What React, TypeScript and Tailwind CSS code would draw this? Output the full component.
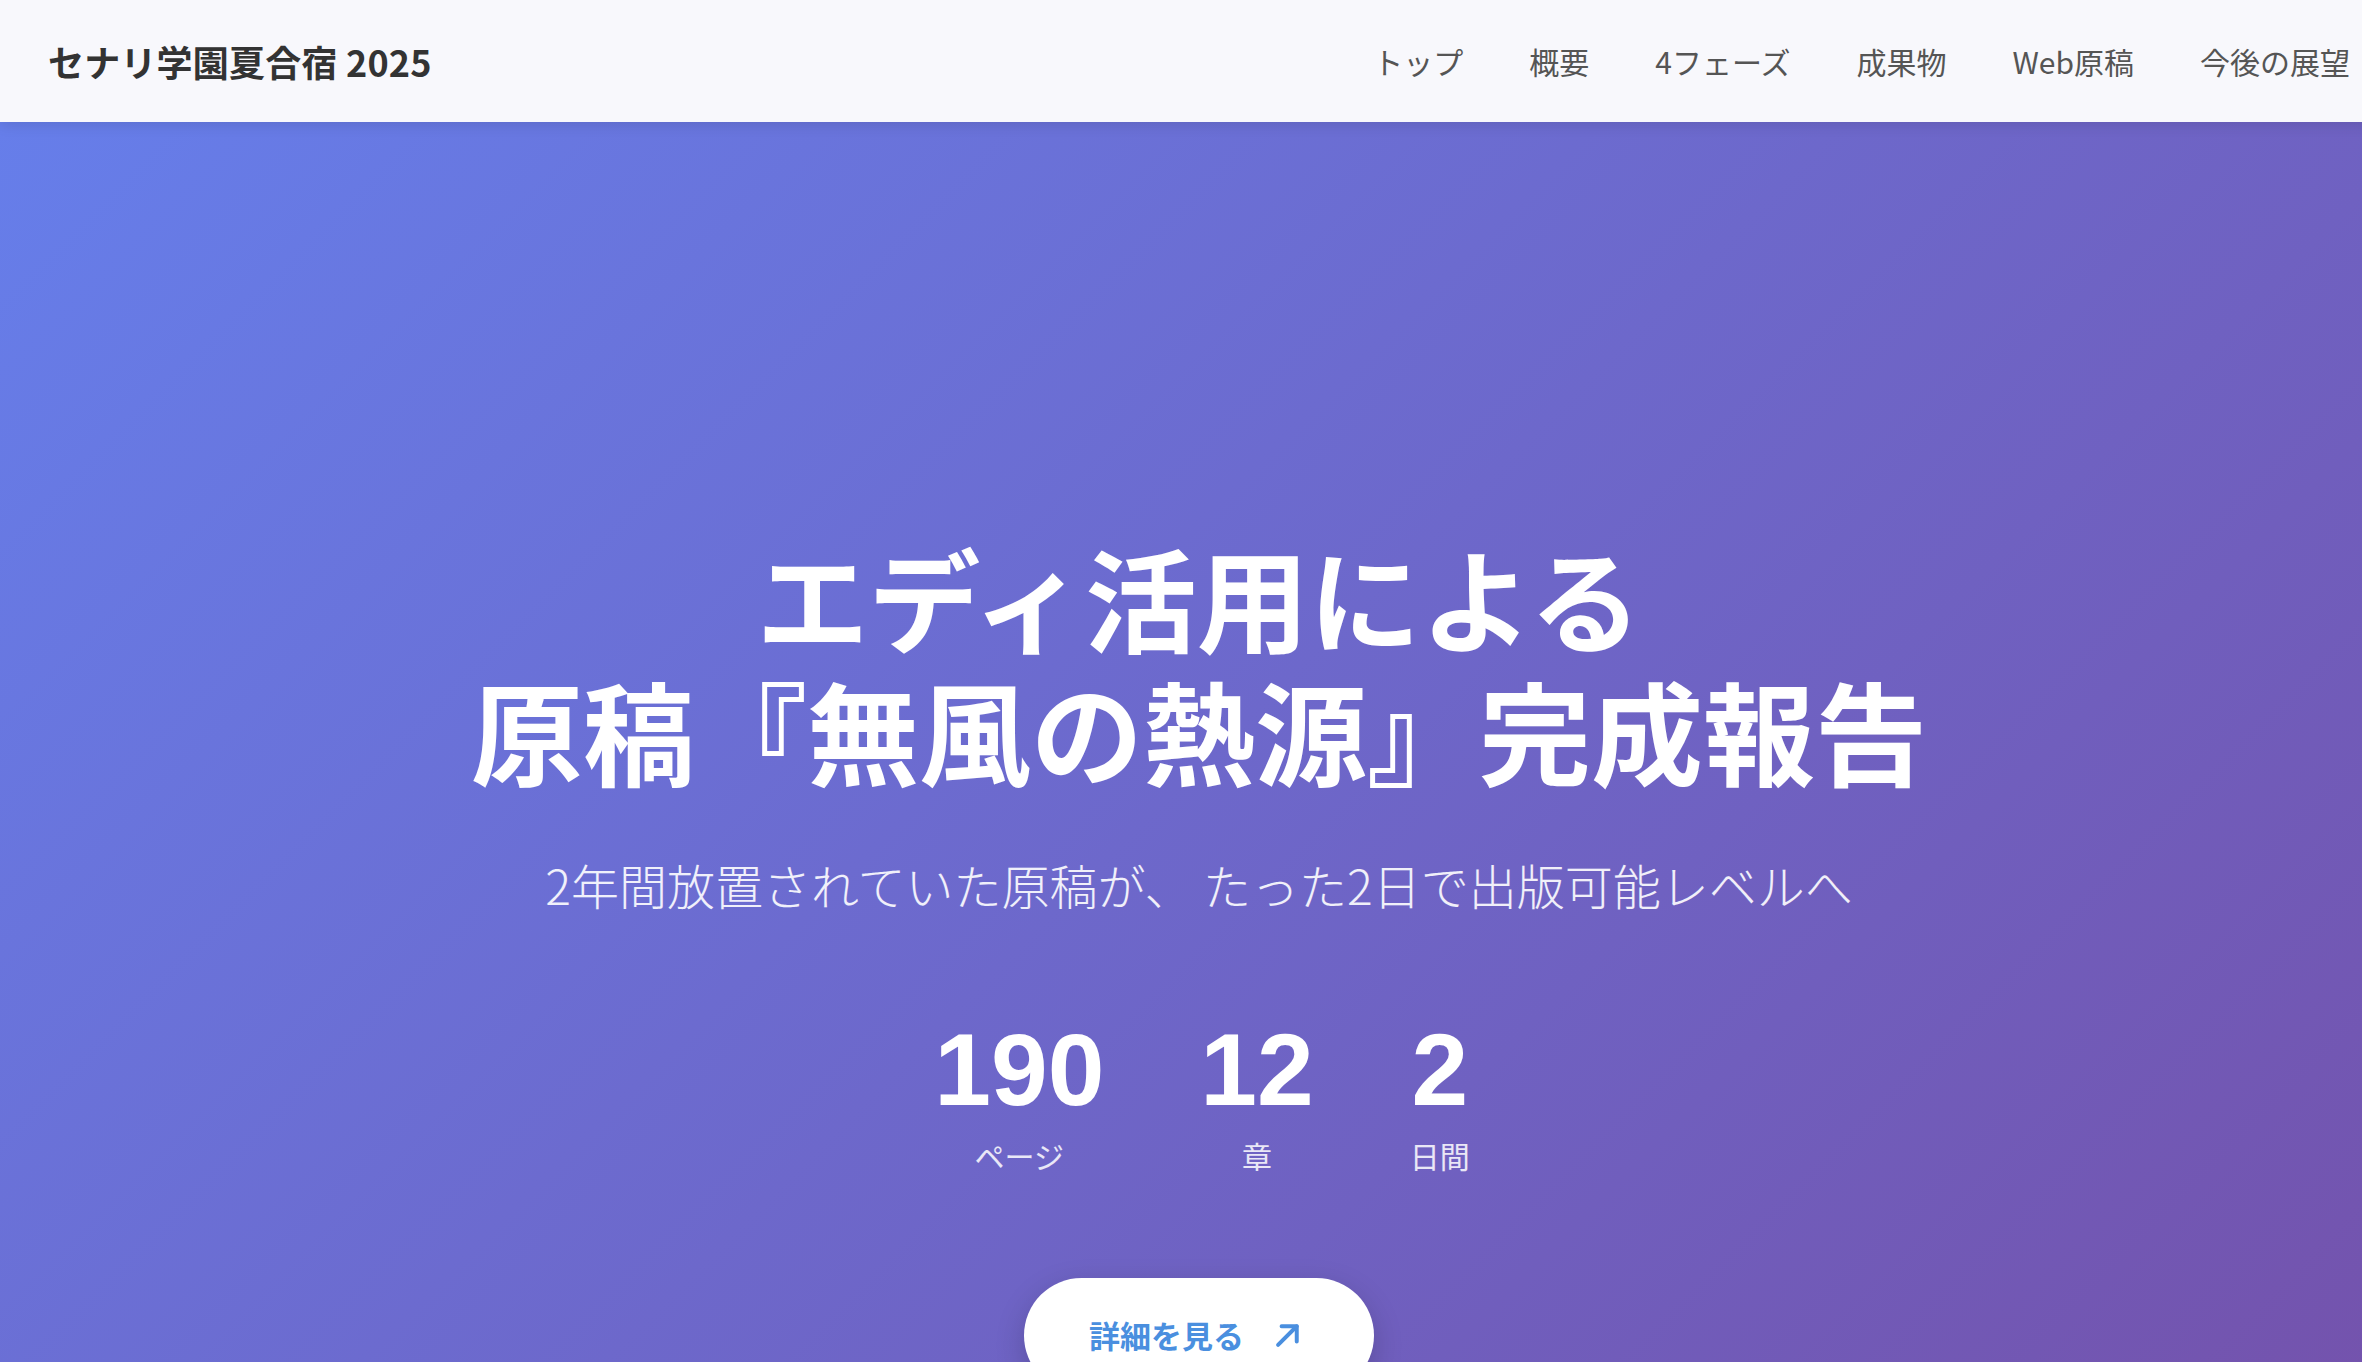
import React from "react";

const navItems = ["トップ", "概要", "4フェーズ", "成果物", "Web原稿", "今後の展望"];

const stats = [
  { num: "190", label: "ページ" },
  { num: "12", label: "章" },
  { num: "2", label: "日間" },
];

export default function App() {
  return (
    <div className="w-screen h-screen overflow-hidden">
      <div className="w-[2398px] font-['Noto_Sans_CJK_JP','Noto_Sans',sans-serif]">
        <header className="relative z-10 h-[122px] bg-[#f8f8fc] flex items-center justify-between px-12 shadow-[0_2px_14px_rgba(0,0,0,0.12)]">
          <div className="text-[36px] font-bold text-[#333333] leading-none tracking-[0.2px]">セナリ学園夏合宿 2025</div>
          <nav className="flex items-center gap-[66px] text-[30px] text-[#555555] leading-none">
            {navItems.map((n) => (
              <a key={n} className="whitespace-nowrap">
                {n}
              </a>
            ))}
          </nav>
        </header>
        <section className="min-h-[1876px] bg-[linear-gradient(135deg,#667eea_0%,#764ba2_100%)] flex flex-col items-center pt-[408px] text-white">
          <h1 className="flex flex-col items-center text-[112px] font-bold text-center whitespace-nowrap">
            <span className="block h-[133px] leading-[133px]">エディ活用による</span>
            <span className="block h-[133px] leading-[133px]">原稿『無風の熱源』完成報告</span>
          </h1>
          <p className="mt-[52px] text-[48px] font-light leading-[1.5] text-white/90 whitespace-nowrap">
            2年間放置されていた原稿が、 たった2日で出版可能レベルへ
          </p>
          <div className="mt-[99px] flex gap-[96px] pl-[6px]">
            {stats.map((s) => (
              <div key={s.label} className="flex flex-col items-center">
                <div className="text-[102px] font-bold leading-none font-['Liberation_Sans',Arial,sans-serif]">{s.num}</div>
                <div className="mt-[12px] text-[30px] leading-[1.5] text-white/85">{s.label}</div>
              </div>
            ))}
          </div>
          <a className="mt-[100px] flex items-center gap-[30px] bg-white rounded-full pl-[65px] pr-[72px] py-[34px] shadow-[0_10px_30px_rgba(0,0,0,0.18)]">
            <span className="text-[31px] font-bold leading-[1.5] text-[#4a8fdf]">詳細を見る</span>
            <svg width="28" height="28" viewBox="0 0 24 24" fill="none" stroke="#4a8fdf" strokeWidth="3.4" strokeLinecap="round" strokeLinejoin="round">
              <path d="M3.5 20.5 L19.5 4.5" />
              <path d="M6.5 4.5 H19.5 V17.5" />
            </svg>
          </a>
        </section>
      </div>
    </div>
  );
}
